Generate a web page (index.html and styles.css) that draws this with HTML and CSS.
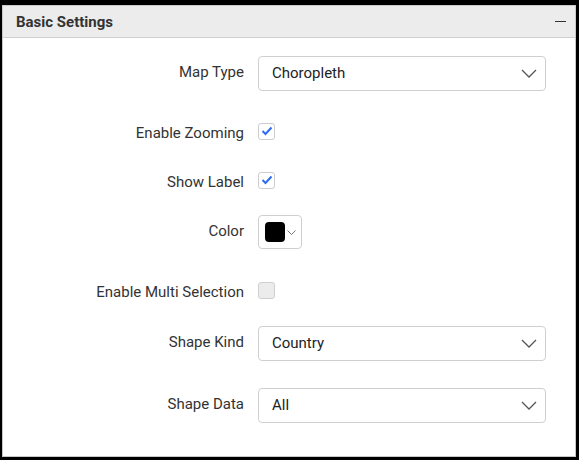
FILE: index.html
```html
<!DOCTYPE html>
<html>
<head>
<meta charset="utf-8">
<link rel="stylesheet" href="styles.css">
</head>
<body>
<div class="panel">
  <div class="header">
    <span class="title">Basic Settings</span>
    <span class="collapse"></span>
  </div>
  <div class="content">
    <div class="row r1">
      <label class="lbl">Map Type</label>
      <div class="select"><span>Choropleth</span>
        <svg class="chev" width="16" height="9" viewBox="0 0 16 9"><path d="M1 1 L8 8 L15 1" fill="none" stroke="#555" stroke-width="1.3"/></svg>
      </div>
    </div>
    <div class="row r2">
      <label class="lbl">Enable Zooming</label>
      <span class="check on"><svg width="12" height="10" viewBox="0 0 12 10"><path d="M1.5 5 L4.5 8 L10.5 1.5" fill="none" stroke="#2c6cf5" stroke-width="2"/></svg></span>
    </div>
    <div class="row r3">
      <label class="lbl">Show Label</label>
      <span class="check on"><svg width="12" height="10" viewBox="0 0 12 10"><path d="M1.5 5 L4.5 8 L10.5 1.5" fill="none" stroke="#2c6cf5" stroke-width="2"/></svg></span>
    </div>
    <div class="row r4">
      <label class="lbl">Color</label>
      <div class="colorbtn"><span class="swatch"></span>
        <svg class="minichev" width="9" height="5" viewBox="0 0 9 5"><path d="M0.5 0.5 L4.5 4.5 L8.5 0.5" fill="none" stroke="#777" stroke-width="1"/></svg>
      </div>
    </div>
    <div class="row r5">
      <label class="lbl">Enable Multi Selection</label>
      <span class="check off"></span>
    </div>
    <div class="row r6">
      <label class="lbl">Shape Kind</label>
      <div class="select"><span>Country</span>
        <svg class="chev" width="16" height="9" viewBox="0 0 16 9"><path d="M1 1 L8 8 L15 1" fill="none" stroke="#555" stroke-width="1.3"/></svg>
      </div>
    </div>
    <div class="row r7">
      <label class="lbl">Shape Data</label>
      <div class="select"><span>All</span>
        <svg class="chev" width="16" height="9" viewBox="0 0 16 9"><path d="M1 1 L8 8 L15 1" fill="none" stroke="#555" stroke-width="1.3"/></svg>
      </div>
    </div>
  </div>
</div>
</body>
</html>
```
FILE: styles.css
```css
html, body {
  margin: 0;
  padding: 0;
  background: #000;
}
body {
  width: 579px;
  height: 460px;
  overflow: hidden;
  font-family: Roboto, "Liberation Sans", sans-serif;
}
.panel {
  margin: 5px 0 0 2px;
  width: 574px;
  height: 452px;
  box-sizing: border-box;
  background: #fff;
  border: 1px solid #c9c9c9;
}
.header {
  height: 32px;
  box-sizing: border-box;
  background: #ececec;
  border-bottom: 1px solid #cfcfcf;
  display: flex;
  align-items: center;
  justify-content: space-between;
  padding: 0 9px 0 13px;
}
.title {
  font-size: 15px;
  font-weight: 700;
  color: #333;
}
.collapse {
  width: 11px;
  height: 1.5px;
  background: #333;
}
.content {
  display: flex;
  flex-direction: column;
}
.row {
  display: grid;
  grid-template-columns: 241px auto;
  column-gap: 14px;
  align-items: center;
  height: 34px;
}
.r1 { margin-top: 18px; height: 35px; }
.r2 { margin-top: 23px; }
.r3 { margin-top: 15px; }
.r4 { margin-top: 18px; }
.r5 { margin-top: 24px; }
.r6 { margin-top: 19px; height: 35px; }
.r7 { margin-top: 27px; height: 35px; }
.lbl {
  text-align: right;
  font-size: 15px;
  color: #333;
  margin-top: -3px;
}
.r2 .lbl, .r3 .lbl, .r5 .lbl { margin-top: 3px; }
.select {
  width: 288px;
  height: 35px;
  box-sizing: border-box;
  border: 1px solid #cfcfcf;
  border-radius: 4px;
  display: flex;
  align-items: center;
  justify-content: space-between;
  padding: 0 8px 0 13px;
  font-size: 15px;
  color: #222;
}
.select span {
  margin-top: -1px;
}
.chev {
  display: block;
}
.check {
  width: 17px;
  height: 17px;
  box-sizing: border-box;
  border: 1px solid #cdcdcd;
  border-radius: 3px;
  display: flex;
  align-items: center;
  justify-content: center;
  background: #fff;
}
.check.off {
  background: #ececec;
  border-color: #cfcfcf;
}
.colorbtn {
  width: 44px;
  height: 34px;
  box-sizing: border-box;
  border: 1px solid #cfcfcf;
  border-radius: 4px;
  display: flex;
  align-items: center;
  padding-left: 6px;
  gap: 2px;
}
.swatch {
  width: 20px;
  height: 20px;
  background: #000;
  border-radius: 4px;
}
.minichev {
  display: block;
  margin-top: 1px;
}
```
